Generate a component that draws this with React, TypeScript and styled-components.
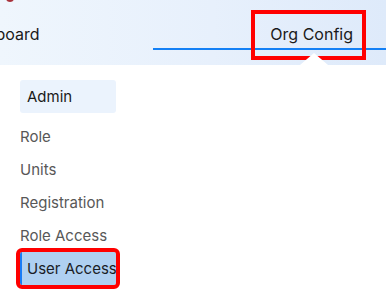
import React from "react";
import styled, { createGlobalStyle } from "styled-components";

const Global = createGlobalStyle`
  html, body {
    margin: 0;
    padding: 0;
    background: #ffffff;
    overflow: hidden;
    font-family: Inter, "Noto Sans", "Liberation Sans", sans-serif;
  }
  * { box-sizing: border-box; }
`;

const Page = styled.div`
  width: 386px;
  height: 303px;
  background: #ffffff;
  display: flex;
  flex-direction: column;
`;

const Header = styled.header`
  position: relative;
  height: 65px;
  display: flex;
  align-items: flex-start;
  background: linear-gradient(90deg, #eff6fd 0%, #e7f0fc 55%, #deeafa 100%);
`;

const LogoBit = styled.span`
  position: absolute;
  left: 6px;
  top: -6px;
  width: 8px;
  height: 8px;
  border-radius: 50%;
  background: #a8323a;
`;

const NavLink = styled.div`
  margin-left: -43px;
  width: 196px;
  flex: none;
  padding-top: 24px;
  font-size: 16px;
  line-height: 20px;
  color: #1a1a1a;
  white-space: nowrap;
`;

const Strip = styled.nav`
  flex: 1;
  height: 50px;
  border-bottom: 2px solid #1480f5;
  display: flex;
  justify-content: flex-end;
  align-items: flex-start;
  padding-right: 24px;
`;

const Tab = styled.div<{ $marked?: boolean }>`
  position: relative;
  margin-top: 14px;
  height: 42px;
  padding: 10px 9px 12px 15px;
  font-size: 16px;
  line-height: 20px;
  color: #1a1a1a;
  white-space: nowrap;
  outline: ${(p) => (p.$marked ? "4px solid #ff0000" : "none")};
  &::after {
    content: "";
    position: absolute;
    left: 45px;
    top: 39px;
    width: 0;
    height: 0;
    border-left: 14px solid transparent;
    border-right: 14px solid transparent;
    border-bottom: 12px solid #ffffff;
  }
`;

const Side = styled.aside`
  padding: 15px 0 0 20px;
  display: flex;
  flex-direction: column;
  width: 116px;
`;

const GroupTitle = styled.div`
  height: 33px;
  padding: 7px 7px;
  font-size: 15px;
  line-height: 19px;
  color: #1a1a1a;
  background: #ebf3fd;
  border-radius: 3px;
  margin-bottom: 7px;
`;

const Item = styled.div<{ $active?: boolean; $marked?: boolean }>`
  height: 33px;
  padding: 7px 0 7px ${(p) => (p.$active ? "5px" : "0")};
  font-size: 15px;
  line-height: 19px;
  white-space: nowrap;
  color: ${(p) => (p.$active ? "#1a1d26" : "#585858")};
  background: ${(p) => (p.$active ? "#afd0f1" : "transparent")};
  border-left: ${(p) => (p.$active ? "2px solid #1a7cf5" : "none")};
  border-radius: ${(p) => (p.$active ? "2px" : "0")};
  outline: ${(p) => (p.$marked ? "4px solid #ff0000" : "none")};
  outline-offset: 0px;
`;

const items = ["Role", "Units", "Registration", "Role Access", "User Access"];

export default function App() {
  return (
    <>
      <Global />
      <Page>
        <Header>
          <LogoBit />
          <NavLink>Dashboard</NavLink>
          <Strip>
            <Tab $marked>Org Config</Tab>
          </Strip>
        </Header>
        <Side>
          <GroupTitle>Admin</GroupTitle>
          {items.map((label) => {
            const active = label === "User Access";
            return (
              <Item key={label} $active={active} $marked={active}>
                {label}
              </Item>
            );
          })}
        </Side>
      </Page>
    </>
  );
}
